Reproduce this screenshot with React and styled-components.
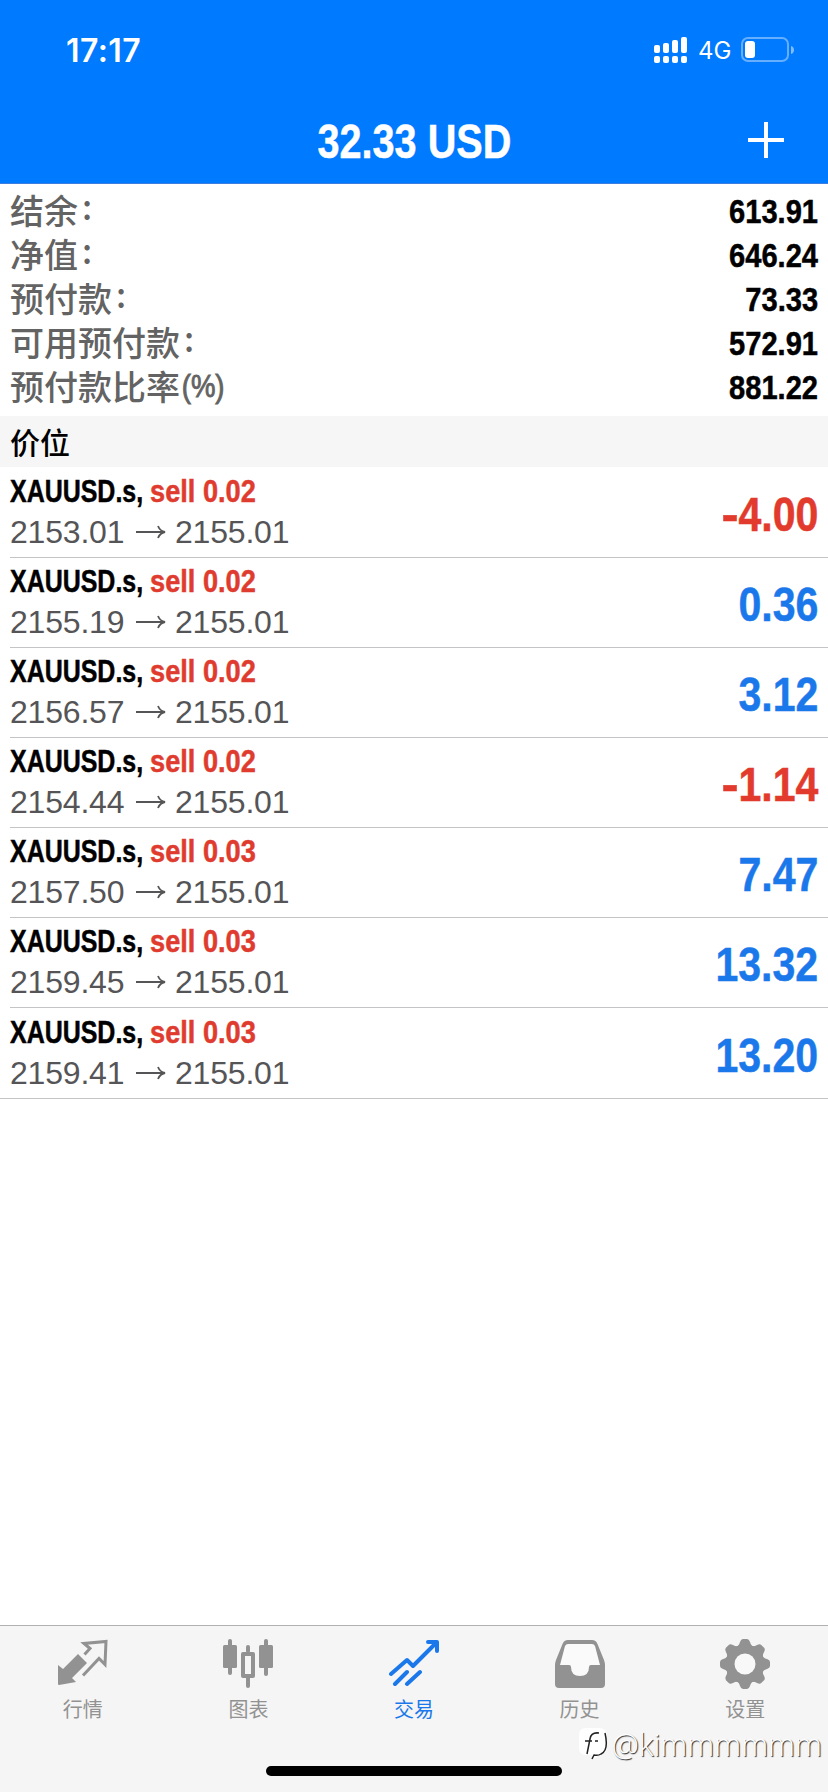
import React from 'react';
import styled, { createGlobalStyle } from 'styled-components';

const GlobalStyle = createGlobalStyle`
  * {
    box-sizing: border-box;
  }
  body {
    margin: 0;
    background: #fff;
    font-family: 'Liberation Sans', 'Noto Sans CJK SC', sans-serif;
  }
`;

const Screen = styled.div`
  position: relative;
  width: 828px;
  height: 1792px;
  display: flex;
  flex-direction: column;
  overflow: hidden;
  background: #fff;
`;

const Header = styled.header`
  height: 184px;
  background: #007aff;
  border-bottom: 1px solid #3c7fe0;
  color: #fff;
`;

const StatusBar = styled.div`
  height: 100px;
  padding: 0 33px 0 66px;
  display: flex;
  align-items: center;
  justify-content: space-between;
`;

const Time = styled.span`
  font-family: Inter, sans-serif;
  font-size: 32px;
  font-weight: 600;
  letter-spacing: 0.4px;
`;

const StatusIcons = styled.div`
  display: flex;
  align-items: center;
`;

const Network = styled.span`
  margin: 0 10px;
  font-family: Inter, sans-serif;
  font-size: 24px;
  width: 33px;
`;

const TitleBar = styled.div`
  height: 84px;
  padding: 0 43px 4px 81px;
  display: grid;
  grid-template-columns: 1fr 38px;
  align-items: center;
`;

const Condensed = styled.span`
  display: inline-block;
  width: ${({ $width }) => ($width ? `${$width}px` : 'auto')};
  font-size: ${({ $size }) => $size}px;
  font-weight: 700;
  line-height: 1;
  white-space: nowrap;
  color: ${({ $color }) => $color || 'inherit'};
  -webkit-text-stroke: 0.5px currentColor;
  transform: scaleX(${({ $scale }) => $scale || 0.855});
  transform-origin: ${({ $origin }) => $origin || 'left'} center;
`;

const Title = styled.h1`
  margin: 0;
  padding-top: 4px;
  text-align: center;
  line-height: 1;
`;

const Summary = styled.section`
  height: 232px;
  padding: 5px 10px 0;
`;

const SummaryRow = styled.div`
  height: 44px;
  display: flex;
  align-items: center;
  justify-content: space-between;
`;

const Label = styled.span`
  display: flex;
  padding-bottom: 2px;
  font-family: 'Noto Sans CJK SC', sans-serif;
  font-size: 34px;
  font-weight: 500;
  line-height: 42px;
  color: #636363;
`;

const Colon = styled.span`
  padding: 0 0 0 4px;
  line-height: 34px;
`;

const Unit = styled.span`
  padding-left: 2px;
  font-family: 'Liberation Sans', sans-serif;
  font-size: 32px;
  -webkit-text-stroke: 0.9px currentColor;
  transform: scaleX(0.86);
  transform-origin: left center;
`;

const SectionTitle = styled.div`
  height: 51px;
  padding-left: 10px;
  background: #f6f6f6;
  font-family: 'Noto Sans CJK SC', sans-serif;
  font-size: 30px;
  font-weight: 500;
  line-height: 50px;
`;

const Positions = styled.section`
  flex: 1;
  padding-top: 1px;
`;

const Position = styled.div`
  height: ${({ $last }) => ($last ? 91 : 90)}px;
  margin-left: ${({ $last }) => ($last ? 0 : 10)}px;
  padding: 0 10px 0 ${({ $last }) => ($last ? 10 : 0)}px;
  display: flex;
  align-items: center;
  justify-content: space-between;
  border-bottom: 1px solid #c4c4c6;
`;

const Details = styled.div`
  display: flex;
  flex-direction: column;
  gap: 9px;
  padding-bottom: 2px;
`;

const Deal = styled.div`
  display: flex;
  line-height: 32px;
`;

const Prices = styled.div`
  display: flex;
  align-items: center;
  font-size: 32px;
  line-height: 32px;
  letter-spacing: -0.2px;
  color: #555557;
`;

const Price = styled.span`
  width: 126px;
`;

const Arrow = styled.svg`
  margin-right: 9px;
`;

const Profit = styled.div`
  padding-top: 5px;
  display: flex;
`;

const Minus = styled.span`
  display: inline-block;
  transform: scaleX(1.25);
  transform-origin: right center;
`;

const TabBar = styled.nav`
  height: 167px;
  padding-top: 13px;
  display: grid;
  grid-template-columns: repeat(5, 1fr);
  align-items: start;
  background: #f5f5f5;
  border-top: 1px solid #b2b2b2;
`;

const Tab = styled.div`
  display: flex;
  flex-direction: column;
  align-items: center;
  color: ${({ $active }) => ($active ? '#1b78ea' : '#929292')};
`;

const TabLabel = styled.span`
  margin-top: 5px;
  font-family: 'Noto Sans CJK SC', sans-serif;
  font-size: 20px;
  line-height: 30px;
`;

const HomeIndicator = styled.div`
  position: absolute;
  left: 266px;
  bottom: 16px;
  width: 296px;
  height: 10px;
  border-radius: 5px;
  background: #000;
`;

const Watermark = styled.div`
  position: absolute;
  right: 6px;
  bottom: 28px;
  display: flex;
  align-items: center;
  gap: 4px;
  font-family: 'Open Sans', sans-serif;
  font-size: 30.500px;
  font-weight: 300;
  line-height: 40px;
  color: #fff;
  text-shadow: 1px 1px 1px #222;
`;

const account = [
  { label: '结余', value: '613.91' },
  { label: '净值', value: '646.24' },
  { label: '预付款', value: '73.33' },
  { label: '可用预付款', value: '572.91' },
  { label: '预付款比率', unit: '(%)', value: '881.22' },
];

const positions = [
  { volume: '0.02', open: '2153.01', profit: '-4.00' },
  { volume: '0.02', open: '2155.19', profit: '0.36' },
  { volume: '0.02', open: '2156.57', profit: '3.12' },
  { volume: '0.02', open: '2154.44', profit: '-1.14' },
  { volume: '0.03', open: '2157.50', profit: '7.47' },
  { volume: '0.03', open: '2159.45', profit: '13.32' },
  { volume: '0.03', open: '2159.41', profit: '13.20' },
];

const SignalIcon = () => (
  <svg width="34" height="28" viewBox="0 0 34 28" fill="#fff">
    <rect x="0" y="9" width="6" height="8" rx="2" />
    <rect x="9" y="7" width="6" height="10" rx="2" />
    <rect x="18" y="4" width="6" height="13" rx="2" />
    <rect x="27" y="1" width="6" height="16" rx="2" />
    <rect x="0" y="20" width="6" height="7" rx="2" />
    <rect x="9" y="20" width="6" height="7" rx="2" />
    <rect x="18" y="20" width="6" height="7" rx="2" />
    <rect x="27" y="20" width="6" height="7" rx="2" />
  </svg>
);

const BatteryIcon = () => (
  <svg width="54" height="26" viewBox="0 0 54 26">
    <rect x="1" y="1" width="46" height="23" rx="6" fill="none" stroke="#fff" strokeOpacity="0.4" strokeWidth="2" />
    <rect x="4" y="4" width="10" height="17" rx="3" fill="#fff" />
    <path d="M50 9c4 1 4 7 0 8z" fill="#fff" fillOpacity="0.5" />
  </svg>
);

const PlusIcon = () => (
  <svg width="38" height="38" viewBox="0 0 38 38" stroke="#fff" strokeWidth="4">
    <path d="M19 1v36M1 19h36" />
  </svg>
);

const QuotesIcon = () => (
  <svg width="50" height="50" viewBox="0 0 50 50">
    <path d="M0 26l5 4L20 15l9 9-15 15 4 4L1 46q-1 0-1-1z" fill="currentColor" />
    <path
      d="M26.500 15.500l5.500-6-6-5 22-2-1 23-6-6-16 17"
      fill="none"
      stroke="currentColor"
      strokeWidth="3"
    />
  </svg>
);

const ChartIcon = () => (
  <svg width="50" height="50" viewBox="0 0 50 50" fill="currentColor">
    <rect x="5" y="0" width="4" height="36" rx="2" />
    <rect x="0" y="6" width="14" height="23" rx="1.5" />
    <rect x="41" y="0" width="4" height="37" rx="2" />
    <rect x="36" y="6" width="14" height="23" rx="1.5" />
    <rect x="23" y="6" width="4" height="8" rx="2" />
    <rect x="23" y="37" width="4" height="12" rx="2" />
    <rect x="20" y="15" width="10" height="22" fill="none" stroke="currentColor" strokeWidth="4" strokeLinejoin="round" />
  </svg>
);

const TradeIcon = () => (
  <svg
    width="50"
    height="50"
    viewBox="0 0 50 50"
    fill="none"
    stroke="currentColor"
    strokeWidth="4"
    strokeLinecap="round"
    strokeLinejoin="round"
  >
    <path d="M2 35l16-14 6 6L46 5M39 3h9v9M6 45l12-12M18 45l13-12" />
  </svg>
);

const HistoryIcon = () => (
  <svg width="50" height="50" viewBox="0 0 50 50" fill="currentColor">
    <path d="M13 1h24q4 0 5.500 4L49 21q1 3 1 5v19q0 4-4 4H4q-4 0-4-4V26q0-2 1-5L7.500 5Q9 1 13 1z" />
    <path
      d="M13 5h24q2 0 3 2l5 19h-9q-2 0-2 2 0 9-9 9t-9-9q0-2-2-2H5L10 7q1-2 3-2z"
      fill="#fafafa"
    />
  </svg>
);

const SettingsIcon = () => (
  <svg width="50" height="50" viewBox="0 0 50 50" fill="currentColor">
    <circle cx="25" cy="25" r="19.500" />
    {[0, 45, 90, 135, 180, 225, 270, 315].map((angle) => (
      <path
        key={angle}
        d="M16 8q3-1 4-5 1-3 3-3h4q2 0 3 3 1 4 4 5z"
        transform={`rotate(${angle} 25 25)`}
      />
    ))}
    <circle cx="25" cy="25" r="10.500" fill="#f8f8f8" />
  </svg>
);

const WatermarkIcon = () => (
  <svg width="30" height="34" viewBox="0 0 30 34">
    <path d="M8 1h13q8 0 8 8v10q0 8-8 9l-5 4-2-4H8q-7 0-7-7V8q0-7 7-7z" fill="#fff" />
    <path
      d="M21 6q-8-1-9 6l-3 15M7 14h7M17 14h3M27 6q4 17-4 21-3 2-7 1l-2 4"
      fill="none"
      stroke="#222"
      strokeWidth="1.5"
    />
  </svg>
);

const tabs = [
  { label: '行情', icon: QuotesIcon },
  { label: '图表', icon: ChartIcon },
  { label: '交易', icon: TradeIcon, active: true },
  { label: '历史', icon: HistoryIcon },
  { label: '设置', icon: SettingsIcon },
];

const App = () => {
  return (
    <Screen>
      <GlobalStyle />
      <Header>
        <StatusBar>
          <Time>17:17</Time>
          <StatusIcons>
            <SignalIcon />
            <Network>4G</Network>
            <BatteryIcon />
          </StatusIcons>
        </StatusBar>
        <TitleBar>
          <Title>
            <Condensed $size={48} $scale={0.825} $origin="center">
              32.33 USD
            </Condensed>
          </Title>
          <PlusIcon />
        </TitleBar>
      </Header>
      <Summary>
        {account.map(({ label, unit, value }) => (
          <SummaryRow key={label}>
            <Label>
              {label}
              {unit ? <Unit>{unit}</Unit> : <Colon>:</Colon>}
            </Label>
            <Condensed $size={34} $origin="right">
              {value}
            </Condensed>
          </SummaryRow>
        ))}
      </Summary>
      <SectionTitle>价位</SectionTitle>
      <Positions>
        {positions.map(({ volume, open, profit }, i) => (
          <Position key={open} $last={i === positions.length - 1}>
            <Details>
              <Deal>
                <Condensed $size={32} $scale={0.78} $width={140}>
                  XAUUSD.s,
                </Condensed>
                <Condensed $size={32} $scale={0.85} $color="#df3c2f">
                  sell {volume}
                </Condensed>
              </Deal>
              <Prices>
                <Price>{open}</Price>
                <Arrow width="30" height="14" viewBox="0 0 30 14" fill="none" stroke="currentColor" strokeWidth="1.8">
                  <path d="M0 7h29M22 1q2 5 7 6-5 1-7 6" />
                </Arrow>
                <span>2155.01</span>
              </Prices>
            </Details>
            <Profit>
              <Condensed $size={48} $origin="right" $color={profit.startsWith('-') ? '#e23a2d' : '#1b78ea'}>
                {profit.startsWith('-') && <Minus>-</Minus>}
                {profit.replace('-', '')}
              </Condensed>
            </Profit>
          </Position>
        ))}
      </Positions>
      <TabBar>
        {tabs.map(({ label, icon: Icon, active }) => (
          <Tab key={label} $active={active}>
            <Icon />
            <TabLabel>{label}</TabLabel>
          </Tab>
        ))}
      </TabBar>
      <HomeIndicator />
      <Watermark>
        <WatermarkIcon />
        @kimmmmmm
      </Watermark>
    </Screen>
  );
};

export default App;
